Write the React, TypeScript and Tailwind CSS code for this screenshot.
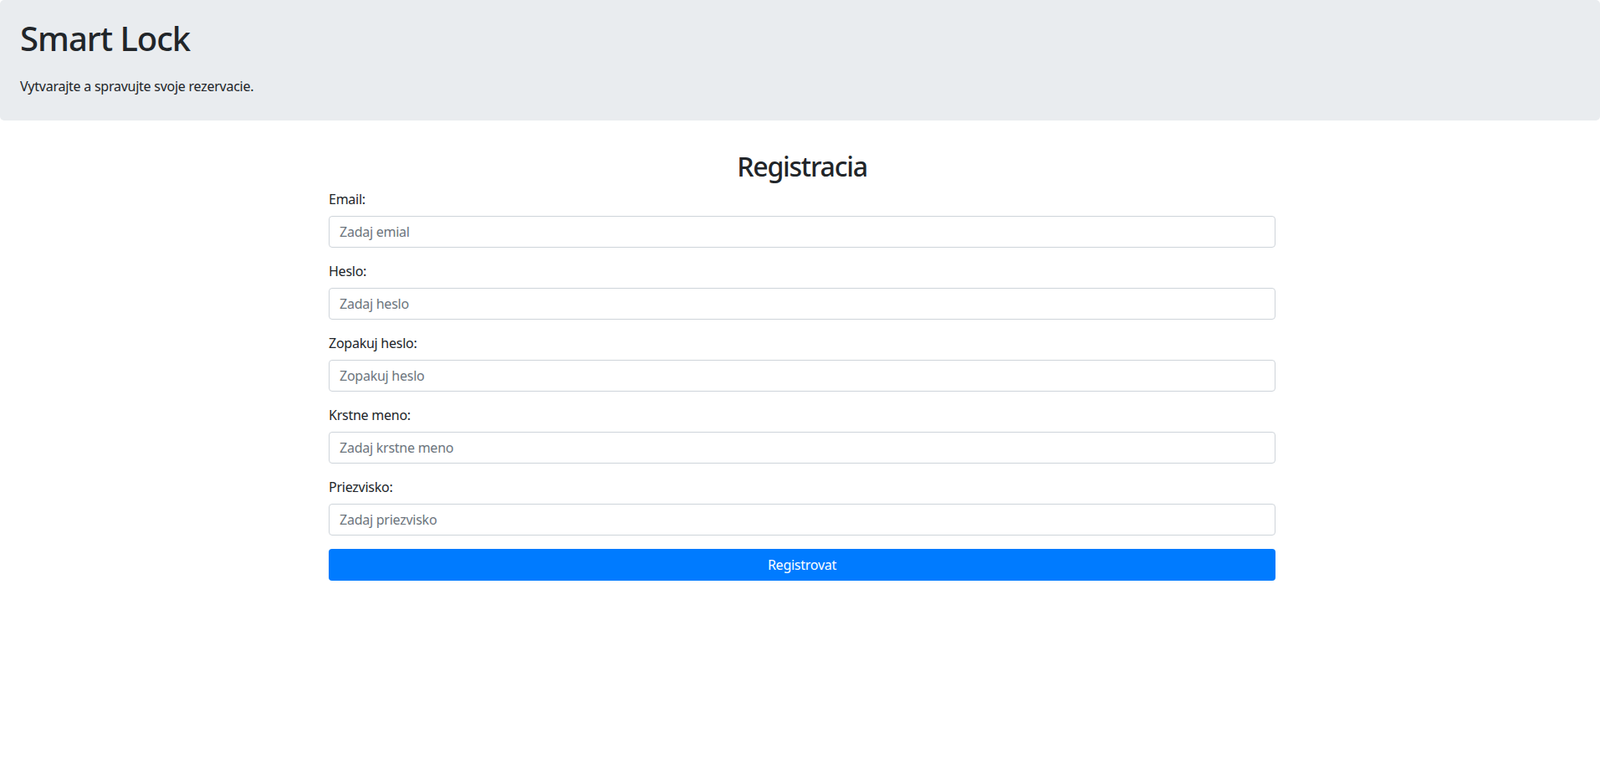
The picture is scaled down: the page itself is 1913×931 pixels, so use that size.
import { useState } from 'react';

const fields = [
  { label: 'Email:', placeholder: 'Zadaj emial', type: 'email' },
  { label: 'Heslo:', placeholder: 'Zadaj heslo', type: 'password' },
  { label: 'Zopakuj heslo:', placeholder: 'Zopakuj heslo', type: 'password' },
  { label: 'Krstne meno:', placeholder: 'Zadaj krstne meno', type: 'text' },
  { label: 'Priezvisko:', placeholder: 'Zadaj priezvisko', type: 'text' },
];

function App() {
  const [values, setValues] = useState<string[]>(fields.map(() => ''));

  return (
    <div className="min-h-screen bg-white text-[#212529] tracking-[-0.25px] font-['Segoe_UI','Noto_Sans',sans-serif]">
      <header className="bg-[#e9ecef] rounded-[5px] px-6 pt-[22px] pb-[29px]">
        <h1 className="text-[40px] leading-[48px] font-medium tracking-[-1px]">Smart Lock</h1>
        <p className="mt-[21px] text-base leading-6">Vytvarajte a spravujte svoje rezervacie.</p>
      </header>

      <main className="ml-[393px] w-[1132px] mt-9">
        <h2 className="text-center text-[32px] leading-[38px] font-medium mb-2 tracking-[-1.2px]">Registracia</h2>
        <form onSubmit={(e) => e.preventDefault()}>
          {fields.map((f, i) => (
            <div key={f.label} className="mb-4">
              <label className="block text-base leading-6 mb-2">{f.label}</label>
              <input
                type={f.type}
                placeholder={f.placeholder}
                value={values[i]}
                onChange={(e) => {
                  const next = [...values];
                  next[i] = e.target.value;
                  setValues(next);
                }}
                className="block w-full h-[38px] px-3 text-base bg-white border border-[#ced4da] rounded placeholder:text-[#6c757d] focus:outline-none"
              />
            </div>
          ))}
          <button
            type="submit"
            className="block w-full h-[38px] rounded bg-[#007bff] text-white text-base"
          >
            Registrovat
          </button>
        </form>
      </main>
    </div>
  );
}

export default App;
